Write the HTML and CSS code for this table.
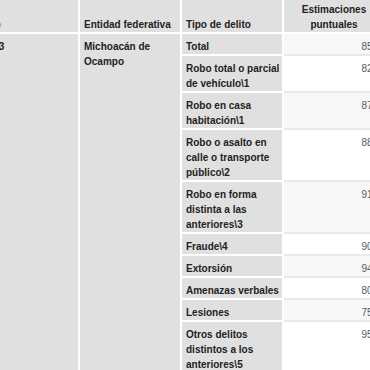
FILE: index.html
```html
<!DOCTYPE html>
<html lang="es">
<head>
<meta charset="utf-8">
<title>Estimaciones por tipo de delito</title>
<link rel="stylesheet" href="styles.css">
</head>
<body>
<div class="viewport">
  <table class="stats">
    <colgroup>
      <col class="col-year">
      <col class="col-state">
      <col class="col-type">
      <col class="col-value">
    </colgroup>
    <thead>
      <tr>
        <th class="year-head">Año</th>
        <th>Entidad federativa</th>
        <th>Tipo de delito</th>
        <th class="value-head">Estimaciones puntuales</th>
      </tr>
    </thead>
    <tbody>
      <tr>
        <td class="group" rowspan="10">2023</td>
        <td class="group" rowspan="10">Michoacán de Ocampo</td>
        <td>Total</td>
        <td class="num">85.6</td>
      </tr>
      <tr class="even"><td>Robo total o parcial de vehículo\1</td><td class="num">82.4</td></tr>
      <tr><td>Robo en casa habitación\1</td><td class="num">87.2</td></tr>
      <tr class="even"><td>Robo o asalto en calle o transporte público\2</td><td class="num">88.1</td></tr>
      <tr><td>Robo en forma distinta a las anteriores\3</td><td class="num">91.3</td></tr>
      <tr class="even"><td>Fraude\4</td><td class="num">90.5</td></tr>
      <tr><td>Extorsión</td><td class="num">94.7</td></tr>
      <tr class="even"><td>Amenazas verbales</td><td class="num">80.9</td></tr>
      <tr><td>Lesiones</td><td class="num">75.8</td></tr>
      <tr class="even"><td>Otros delitos distintos a los anteriores\5</td><td class="num">95.2</td></tr>
    </tbody>
  </table>
</div>
</body>
</html>
```
FILE: styles.css
```css
html, body {
  margin: 0;
  padding: 0;
  background: #ffffff;
}

.viewport {
  width: 370px;
  height: 370px;
  overflow: hidden;
}

/* wide table, scrolled so the first column is partly out of view */
.stats {
  margin-left: -22px;
  border-collapse: separate;
  border-spacing: 0;
  table-layout: fixed;
  width: 408px;
  font-family: "Liberation Sans", Arial, sans-serif;
  font-size: 10px;
  color: #222222;
}

.stats col {
  width: 102px;
}

.stats th,
.stats td {
  background: #e0e0e0;
  border-right: 2px solid #ffffff;
  border-bottom: 2px solid #ffffff;
  padding: 5px 1px 0 4px;
  line-height: 15px;
  text-align: left;
  vertical-align: top;
  font-weight: bold;
}

.stats th {
  height: 34px;
  box-sizing: border-box;
  padding: 0 1px 0 4px;
  vertical-align: bottom;
}

.stats th.year-head {
  color: #a8a8a8;
}

.stats th.value-head {
  text-align: center;
  padding: 0 2px 0;
}

.stats td.num {
  background: #f7f7f7;
  border-bottom: 2px solid #e9e9e9;
  padding-right: 3px;
  text-align: right;
  font-weight: normal;
  color: #5a5a5a;
}

.stats tr.even td.num {
  background: #ffffff;
}
```
